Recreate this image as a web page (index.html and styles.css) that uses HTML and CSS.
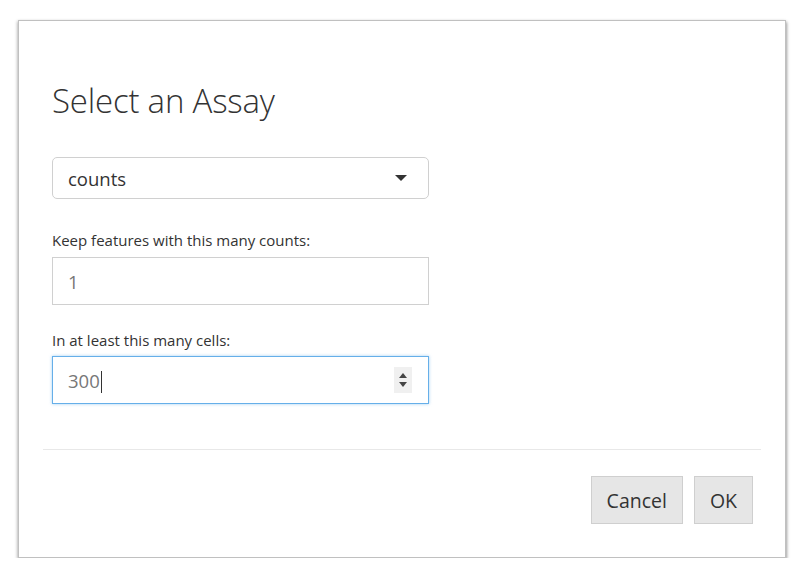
FILE: index.html
```html
<!DOCTYPE html>
<html>
<head>
<meta charset="utf-8">
<link rel="stylesheet" href="styles.css">
</head>
<body>
<div class="page">
  <div class="dialog">
    <div class="dialog-body">
      <h1 class="title">Select an Assay</h1>
      <div class="select">
        <span class="value">counts</span>
        <span class="caret"></span>
      </div>
      <div class="field">
        <label class="label">Keep features with this many counts:</label>
        <div class="input"><span class="value muted">1</span></div>
      </div>
      <div class="field">
        <label class="label">In at least this many cells:</label>
        <div class="input focused">
          <span class="value muted">300<span class="cursor"></span></span>
          <span class="spinner">
            <svg width="10" height="20" viewBox="0 0 10 20"><path d="M1 8 L5 3 L9 8 Z" fill="#444"/><path d="M1 12 L5 17 L9 12 Z" fill="#444"/></svg>
          </span>
        </div>
      </div>
    </div>
    <div class="dialog-footer">
      <button class="btn">Cancel</button>
      <button class="btn">OK</button>
    </div>
  </div>
</div>
</body>
</html>
```
FILE: styles.css
```css
html, body {
  margin: 0;
  padding: 0;
  background: #ffffff;
}
body {
  font-family: "Open Sans", "DejaVu Sans", sans-serif;
  color: #333;
}
.page {
  padding: 20px 0 0 18px;
}
.dialog {
  width: 768px;
  height: 538px;
  box-sizing: border-box;
  border: 1px solid #c0c0c0;
  background: #fff;
  box-shadow: 1px 2px 3px rgba(0, 0, 0, 0.35), -1px 1px 3px rgba(0,0,0,0.2);
  display: flex;
  flex-direction: column;
}
.dialog-body {
  padding: 0 33px;
  flex: 1;
}
.title {
  font-weight: 300;
  font-size: 33px;
  line-height: 40px;
  margin: 60px 0 0 0;
  color: #333;
  letter-spacing: -0.2px;
}
.select {
  margin-top: 36px;
  width: 377px;
  height: 42px;
  box-sizing: border-box;
  border: 1px solid #d0d0d0;
  border-radius: 5px;
  display: flex;
  align-items: center;
  justify-content: space-between;
  padding: 0 21px 0 15px;
}
.value {
  font-size: 18.5px;
  color: #333;
}
.muted {
  color: #777;
}
.caret {
  width: 0;
  height: 0;
  border-left: 6px solid transparent;
  border-right: 6px solid transparent;
  border-top: 6px solid #333;
}
.field {
  display: flex;
  flex-direction: column;
}
.label {
  font-size: 15px;
  line-height: 20px;
  color: #333;
  margin: 31px 0 7px 0;
}
.field + .field .label {
  margin-top: 25px;
  margin-bottom: 6px;
}
.input {
  width: 377px;
  height: 48px;
  box-sizing: border-box;
  border: 1px solid #d0d0d0;
  display: flex;
  align-items: center;
  justify-content: space-between;
  padding: 0 16px 0 15px;
}
.input.focused {
  border-color: #66afe9;
  box-shadow: 0 0 3px rgba(102, 175, 233, 0.6);
}
.cursor {
  display: inline-block;
  width: 1px;
  height: 22px;
  background: #333;
  vertical-align: -5px;
  margin-left: 1px;
}
.spinner {
  width: 18px;
  height: 26px;
  background: #f0f0f0;
  display: flex;
  align-items: center;
  justify-content: center;
}
.dialog-footer {
  margin: 0 24px;
  border-top: 1px solid #e8e8e8;
  height: 108px;
  box-sizing: border-box;
  display: flex;
  justify-content: flex-end;
  align-items: flex-start;
  gap: 11px;
  padding: 26px 8px 0 0;
}
.btn {
  font-family: "Open Sans", "DejaVu Sans", sans-serif;
  font-size: 19.5px;
  color: #333;
  background: #e6e6e6;
  border: 1px solid #cfcfcf;
  height: 48px;
  padding: 0 15px;
  border-radius: 0;
}
```
